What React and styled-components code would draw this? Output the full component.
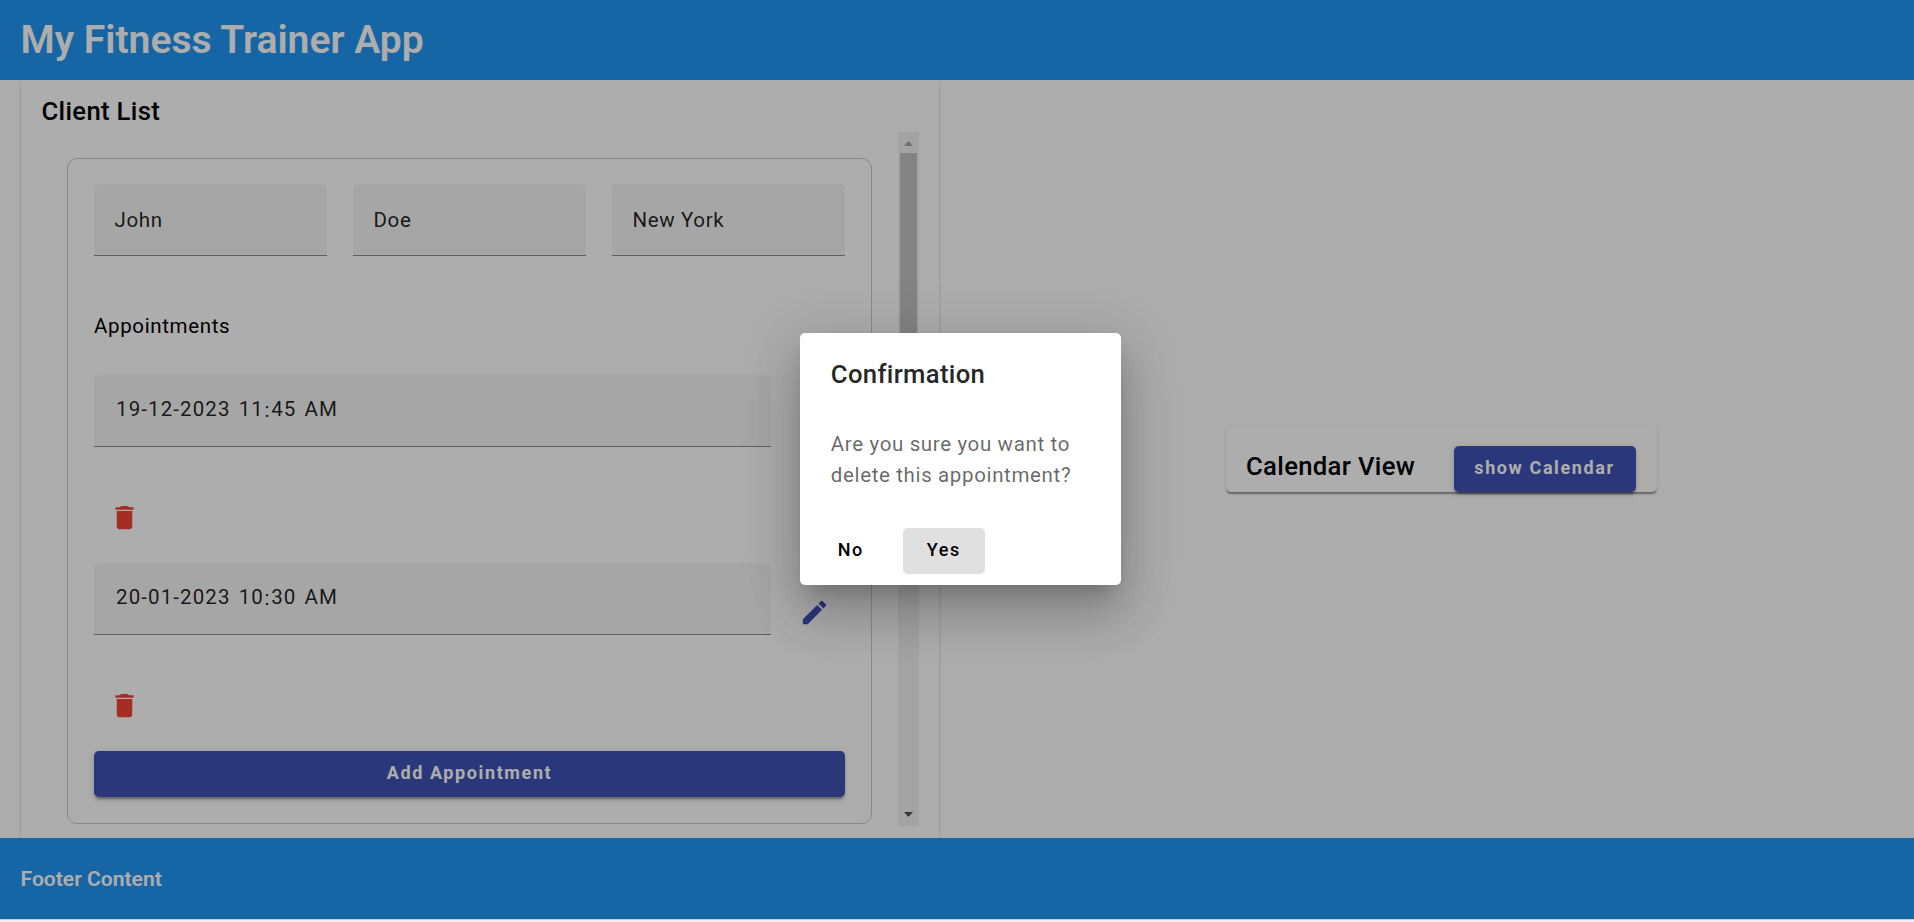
import React from "react";
import styled, { createGlobalStyle } from "styled-components";

const GlobalStyle = createGlobalStyle`
  *, *::before, *::after { box-sizing: border-box; }
  html, body { margin: 0; height: 100%; overflow: hidden; background: #f0f0f0; }
  body { font-family: Roboto, "Liberation Sans", sans-serif; color: #000; }
  h1, h2, p { margin: 0; }
  button { font-family: inherit; border: 0; }
`;

const Page = styled.div`
  position: relative;
  display: flex;
  flex-direction: column;
  height: 920px;
  border-bottom: 1px solid #c3d2de;
  background: #fff;
`;

const Header = styled.header`
  flex: none;
  height: 80px;
  padding: 16px 20.5px 0;
  background: #2196f3;
  color: #fff;
`;

const AppTitle = styled.h1`
  font-size: 39.1px;
  font-weight: 600;
  line-height: 49px;
`;

const Main = styled.main`
  flex: none;
  display: flex;
  height: 758px;
  overflow: hidden;
`;

const Footer = styled.footer`
  flex: none;
  display: flex;
  align-items: center;
  height: 81px;
  padding: 0 20.5px;
  background: #2196f3;
  color: #fff;
  font-size: 21.1px;
  font-weight: 600;
`;

const cardShadow = `
  0 2.6px 1.3px -1.3px rgba(0, 0, 0, 0.2),
  0 1.3px 1.3px 0 rgba(0, 0, 0, 0.14),
  0 1.3px 3.9px 0 rgba(0, 0, 0, 0.12)`;

const ClientPanel = styled.section`
  flex: none;
  width: 918px;
  margin-left: 21px;
  padding: 11px 20px 0;
  box-shadow: ${cardShadow};
`;

const CardTitle = styled.h2`
  font-size: 25.7px;
  font-weight: 500;
  line-height: 41px;
  letter-spacing: 0.0125em;
  white-space: nowrap;
`;

const PanelTitle = styled(CardTitle)`
  padding-left: 0.5px;
`;

const Scroller = styled.div`
  display: flex;
  height: 694px;
`;

const ClientList = styled.div`
  flex: 1;
  padding: 26px 26px 0;
`;

const ClientCard = styled.article`
  height: 666px;
  padding: 25px 26px;
  border: 1px solid #ccc;
  border-radius: 10px;
`;

const Scrollbar = styled.div`
  flex: none;
  display: flex;
  flex-direction: column;
  align-items: center;
  width: 21px;
  background: #f1f1f1;
`;

const ScrollArrow = styled.svg`
  flex: none;
  display: block;
  width: 21px;
  height: 21px;
  fill: ${(p) => (p.$active ? "#505050" : "#a3a3a3")};
`;

const ScrollTrack = styled.div`
  flex: 1;
`;

const ScrollThumb = styled.div`
  width: 17px;
  height: 300px;
  background: #c1c1c1;
`;

const NameRow = styled.div`
  display: grid;
  grid-template-columns: repeat(3, 233px);
  gap: 26px;
  height: 98px;
`;

const Field = styled.div`
  height: 72px;
  width: ${(p) => p.$width || "100%"};
  padding: 0 ${(p) => (p.$date ? 22 : 20.5)}px;
  border-bottom: 1px solid rgba(0, 0, 0, 0.42);
  border-radius: 5px 5px 0 0;
  background: #f5f5f5;
  color: rgba(0, 0, 0, 0.87);
  font-size: 20.5px;
  line-height: ${(p) => (p.$date ? 69 : 72)}px;
  letter-spacing: ${(p) => (p.$date ? 0.054 : 0.03125)}em;
  word-spacing: ${(p) => (p.$date ? 1.9 : 0)}px;
  white-space: pre;
`;

const Colon = styled.span`
  position: relative;
  top: 1px;
  margin: 0 0.6px;
`;

const Subheading = styled.p`
  padding: 28.5px 0 33.5px;
  font-size: 20.5px;
  line-height: 31px;
  letter-spacing: 0.03125em;
`;

const Appointment = styled.div`
  height: 188px;
`;

const AppointmentRow = styled.div`
  display: flex;
  align-items: center;
  justify-content: space-between;
  height: 98px;
`;

const FieldSlot = styled.div`
  align-self: flex-start;
`;

const IconButton = styled.button`
  display: flex;
  align-items: center;
  justify-content: center;
  width: 62px;
  height: 62px;
  padding: 0;
  background: transparent;
  color: ${(p) => p.$color};
`;

const DeleteButton = styled(IconButton)`
  width: 61px;
  margin-top: 13.5px;
`;

const Icon = styled.svg`
  display: block;
  width: 31px;
  height: 31px;
  fill: currentColor;
`;

const RaisedButton = styled.button`
  display: block;
  width: ${(p) => p.$width || "100%"};
  height: 46px;
  padding: 0 0 3px;
  border-radius: 5px;
  background: #3f51b5;
  color: #fff;
  font-size: 18px;
  font-weight: 700;
  letter-spacing: 0.0892857em;
  white-space: nowrap;
  box-shadow:
    0 3.9px 1.3px -2.6px rgba(0, 0, 0, 0.2),
    0 2.6px 2.6px 0 rgba(0, 0, 0, 0.14),
    0 1.3px 6.4px 0 rgba(0, 0, 0, 0.12);
`;

const CalendarArea = styled.section`
  flex: 1;
  display: flex;
  align-items: center;
  justify-content: center;
  padding: 0 0 0 29px;
`;

const CalendarCard = styled.div`
  display: flex;
  align-items: flex-end;
  justify-content: space-between;
  width: 431px;
  height: 66px;
  padding: 0 21px 0 20.5px;
  border-radius: 5px;
  box-shadow: ${cardShadow};
`;

const CalendarTitle = styled(CardTitle)`
  padding-bottom: 5px;
`;

const Backdrop = styled.div`
  position: absolute;
  inset: 0;
  display: flex;
  align-items: center;
  justify-content: center;
  padding: 0 0 1px 7px;
  background: rgba(0, 0, 0, 0.32);
`;

const Dialog = styled.div`
  width: 321px;
  height: 252px;
  padding: 21px 30.8px 0;
  border-radius: 5px;
  background: #fff;
  box-shadow:
    0 14px 19px -9px rgba(0, 0, 0, 0.2),
    0 31px 49px 4px rgba(0, 0, 0, 0.14),
    0 12px 59px 10px rgba(0, 0, 0, 0.12);
`;

const DialogTitle = styled(CardTitle)`
  color: rgba(0, 0, 0, 0.87);
`;

const DialogText = styled.p`
  padding-top: 34px;
  color: rgba(0, 0, 0, 0.6);
  font-size: 20.5px;
  line-height: 30.8px;
  letter-spacing: 0.03125em;
`;

const DialogActions = styled.div`
  display: flex;
  gap: 11px;
  margin: 37px 0 0 -21px;
`;

const DialogButton = styled.button`
  width: 82px;
  height: 46px;
  padding: 0 0 3px;
  border-radius: 5px;
  background: ${(p) => (p.$focused ? "#e0e0e0" : "transparent")};
  color: #000;
  font-size: 18px;
  font-weight: 500;
  letter-spacing: 0.0892857em;
`;

const TrashIcon = () => (
  <Icon viewBox="0 0 24 24">
    <path d="M6 19c0 1.1.9 2 2 2h8c1.1 0 2-.9 2-2V7H6v12zM19 4h-3.5l-1-1h-5l-1 1H5v2h14V4z" />
  </Icon>
);

const PencilIcon = () => (
  <Icon viewBox="0 0 24 24">
    <path d="M3 17.25V21h3.75L17.81 9.94l-3.75-3.75L3 17.25zM20.71 7.04c.39-.39.39-1.02 0-1.41l-2.34-2.34c-.39-.39-1.02-.39-1.41 0l-1.83 1.83 3.75 3.75 1.83-1.83z" />
  </Icon>
);

const client = ["John", "Doe", "New York"];
const appointments = [
  { date: "19-12-2023", hour: "11", minute: "45 AM" },
  { date: "20-01-2023", hour: "10", minute: "30 AM" },
];

export default function App() {
  return (
    <>
      <GlobalStyle />
      <Page>
        <Header>
          <AppTitle>My Fitness Trainer App</AppTitle>
        </Header>
        <Main>
          <ClientPanel>
            <PanelTitle>Client List</PanelTitle>
            <Scroller>
              <ClientList>
                <ClientCard>
                  <NameRow>
                    {client.map((value) => (
                      <Field key={value}>{value}</Field>
                    ))}
                  </NameRow>
                  <Subheading>Appointments</Subheading>
                  {appointments.map((a) => (
                    <Appointment key={a.date}>
                      <AppointmentRow>
                        <FieldSlot>
                          <Field $date $width="677px">
                            {a.date} {a.hour}
                            <Colon>:</Colon>
                            {a.minute}
                          </Field>
                        </FieldSlot>
                        <IconButton $color="#3f51b5" aria-label="Edit">
                          <PencilIcon />
                        </IconButton>
                      </AppointmentRow>
                      <DeleteButton $color="#f44336" aria-label="Delete">
                        <TrashIcon />
                      </DeleteButton>
                    </Appointment>
                  ))}
                  <RaisedButton>Add Appointment</RaisedButton>
                </ClientCard>
              </ClientList>
              <Scrollbar>
                <ScrollArrow viewBox="0 0 21 21">
                  <path d="M6 14h9l-4.5-5z" />
                </ScrollArrow>
                <ScrollTrack>
                  <ScrollThumb />
                </ScrollTrack>
                <ScrollArrow viewBox="0 0 21 21" $active>
                  <path d="M6 7h9l-4.5 5z" />
                </ScrollArrow>
              </Scrollbar>
            </Scroller>
          </ClientPanel>
          <CalendarArea>
            <CalendarCard>
              <CalendarTitle>Calendar View</CalendarTitle>
              <RaisedButton $width="182px">show Calendar</RaisedButton>
            </CalendarCard>
          </CalendarArea>
        </Main>
        <Footer>Footer Content</Footer>
        <Backdrop>
          <Dialog role="dialog">
            <DialogTitle>Confirmation</DialogTitle>
            <DialogText>Are you sure you want to delete this appointment?</DialogText>
            <DialogActions>
              <DialogButton>No</DialogButton>
              <DialogButton $focused>Yes</DialogButton>
            </DialogActions>
          </Dialog>
        </Backdrop>
      </Page>
    </>
  );
}
